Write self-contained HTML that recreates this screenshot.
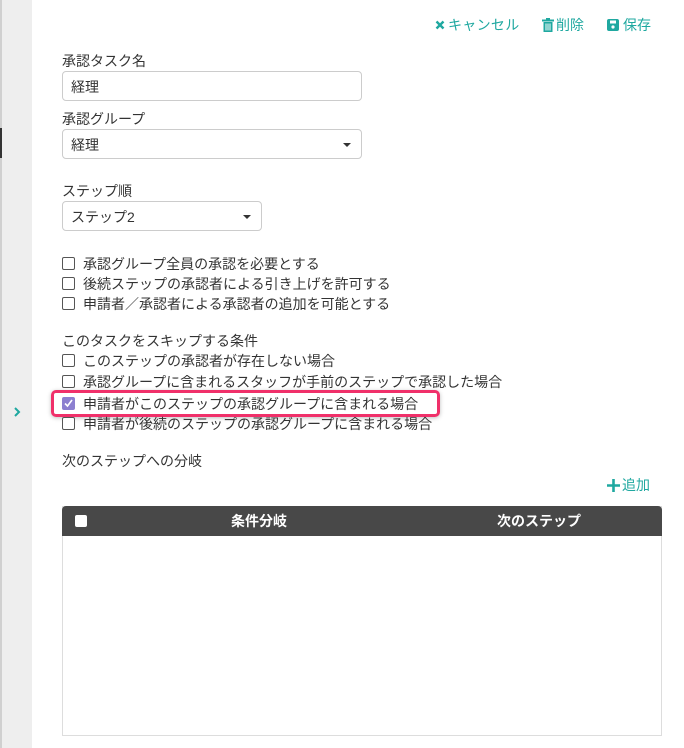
<!DOCTYPE html>
<html><head><meta charset="utf-8"><style>
*{margin:0;padding:0;box-sizing:border-box}
body{width:684px;height:748px;overflow:hidden;background:#fff;font-family:"Liberation Sans","Noto Sans CJK JP",sans-serif;font-size:14px;color:#333;position:relative}
.a{position:absolute;white-space:nowrap;line-height:18px}
.side{position:absolute;left:0;top:0;width:32px;height:748px;background:#eeeeee}
.side .l{position:absolute;left:0;top:0;width:2px;height:748px;background:#d0d0d0}
.side .d{position:absolute;left:0;top:128px;width:2px;height:30px;background:#333}
.inp{position:absolute;left:62px;width:300px;height:30px;border:1px solid #ccc;border-radius:4px;padding:6px 8px;font-size:14px;line-height:18px}
.caret{position:absolute;right:10px;top:13px;width:0;height:0;border-left:4px solid transparent;border-right:4px solid transparent;border-top:4px solid #333}
.cb{position:absolute;left:62px;width:13px;height:13px;border:1px solid #555;border-radius:2px;background:#fff}
.t{color:#1fa8a0}
</style></head><body>
<div class="side"><div class="l"></div><div class="d"></div>
<svg class="a" style="left:12px;top:406px" width="10" height="12" viewBox="0 0 10 12"><path d="M3 2l4 4-4 4" stroke="#1fa8a0" stroke-width="2" fill="none"/></svg></div>

<svg class="a" style="left:435px;top:20px" width="10" height="10" viewBox="0 0 10 10"><path d="M1.5 1.5l7 7M8.5 1.5l-7 7" stroke="#1fa8a0" stroke-width="2.4"/></svg>
<div class="a t" style="left:448px;top:16px;letter-spacing:0.3px">キャンセル</div>
<svg class="a" style="left:542px;top:18px" width="12" height="14" viewBox="0 0 12 14"><rect x="0" y="1.5" width="12" height="2" fill="#1fa8a0"/><rect x="4" y="0" width="4" height="2" fill="#1fa8a0"/><path d="M1.5 4h9v10h-9z" fill="#1fa8a0"/><path d="M4 5.5v7M6 5.5v7M8 5.5v7" stroke="#fff" stroke-width="1"/></svg>
<div class="a t" style="left:556px;top:16px">削除</div>
<svg class="a" style="left:607px;top:19px" width="12" height="12" viewBox="0 0 12 12"><rect width="12" height="12" rx="2" fill="#1fa8a0"/><rect x="3" y="1.5" width="6" height="3" fill="#fff"/><circle cx="6" cy="8" r="1.6" fill="#fff"/></svg>
<div class="a t" style="left:623px;top:16px">保存</div>

<div class="a" style="left:62px;top:52px">承認タスク名</div>
<div class="inp" style="top:71px">経理</div>
<div class="a" style="left:62px;top:110px">承認グループ</div>
<div class="inp" style="top:129px">経理<div class="caret"></div></div>
<div class="a" style="left:62px;top:182px">ステップ順</div>
<div class="inp" style="top:201px;width:200px">ステップ2<div class="caret"></div></div>

<div class="cb" style="top:257px"></div><div class="a" style="left:83px;top:255px">承認グループ全員の承認を必要とする</div>
<div class="cb" style="top:277px"></div><div class="a" style="left:83px;top:275px">後続ステップの承認者による引き上げを許可する</div>
<div class="cb" style="top:297px"></div><div class="a" style="left:83px;top:295px">申請者／承認者による承認者の追加を可能とする</div>

<div class="a" style="left:62px;top:332px">このタスクをスキップする条件</div>
<div class="cb" style="top:354px"></div><div class="a" style="left:83px;top:352px">このステップの承認者が存在しない場合</div>
<div class="cb" style="top:375px"></div><div class="a" style="left:83px;top:373px">承認グループに含まれるスタッフが手前のステップで承認した場合</div>
<div class="a" style="left:51px;top:390px;width:389px;height:27px;border:3px solid #f0306a;border-radius:5px;box-shadow:0 1px 4px rgba(0,0,0,.25)"></div>
<div class="cb" style="top:397px;background:#8c7fd0;border-color:#8c7fd0"><svg width="11" height="11" viewBox="0 0 11 11" style="position:absolute;left:0;top:0"><path d="M2 5.5l2.5 2.5 4.5-6" stroke="#fff" stroke-width="1.6" fill="none"/></svg></div>
<div class="a" style="left:83px;top:395px">申請者がこのステップの承認グループに含まれる場合</div>
<div class="cb" style="top:417px"></div><div class="a" style="left:83px;top:415px">申請者が後続のステップの承認グループに含まれる場合</div>

<div class="a" style="left:62px;top:452px">次のステップへの分岐</div>
<svg class="a" style="left:607px;top:479px" width="13" height="13" viewBox="0 0 13 13"><path d="M6.5 0v13M0 6.5h13" stroke="#1fa8a0" stroke-width="2.6"/></svg>
<div class="a t" style="left:622px;top:476px">追加</div>

<div class="a" style="left:62px;top:506px;width:600px;height:230px;border:1px solid #ddd"></div>
<div class="a" style="left:62px;top:506px;width:600px;height:30px;background:#484848;border-radius:4px 4px 0 0;color:#fff;font-weight:bold">
<div class="a" style="left:13px;top:9px;width:12px;height:12px;background:#fff;border-radius:2px"></div>
<div class="a" style="left:169px;top:6px">条件分岐</div>
<div class="a" style="left:435px;top:6px">次のステップ</div>
</div>
</body></html>
